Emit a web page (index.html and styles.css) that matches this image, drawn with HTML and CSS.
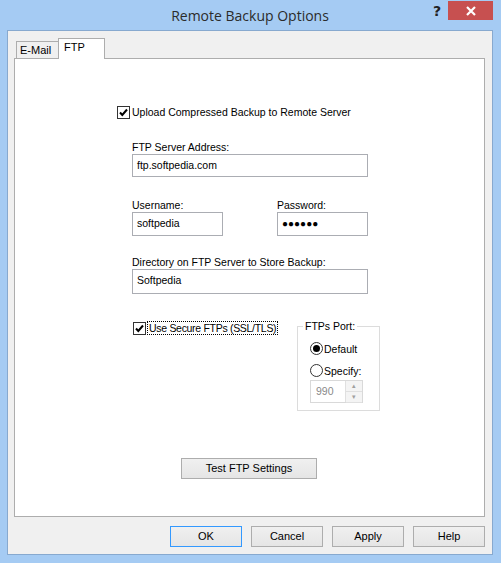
FILE: index.html
```html
<!DOCTYPE html>
<html lang="en">

<head>
    <meta charset="UTF-8">
    <title>Remote Backup Options</title>
    <link rel="stylesheet" href="styles.css">
</head>

<body>
    <div class="window">
        <div class="titlebar">
            <span class="title">Remote Backup Options</span>
            <span class="help-btn">?</span>
            <span class="close-btn">
                <svg width="10" height="10" viewBox="0 0 10 10">
                    <path d="M1 1 L9 9 M9 1 L1 9" stroke="#fff" stroke-width="2.2" />
                </svg>
            </span>
        </div>
        <div class="client">
            <div class="tabs">
                <span class="tab">E-Mail</span>
                <span class="tab active">FTP</span>
            </div>
            <div class="panel">
                <div class="content">
                    <label class="check-row upload">
                        <span class="checkbox">
                            <svg width="13" height="13" viewBox="0 0 13 13">
                                <rect x="0.5" y="0.5" width="12" height="12" fill="#fff" stroke="#333" />
                                <path d="M3 6.5 L5.3 9 L10 3.5" fill="none" stroke="#000" stroke-width="2" />
                            </svg>
                        </span>
                        <span>Upload Compressed Backup to Remote Server</span>
                    </label>

                    <div class="field server">
                        <span class="label">FTP Server Address:</span>
                        <span class="input wide">ftp.softpedia.com</span>
                    </div>

                    <div class="cred-row">
                        <div class="field">
                            <span class="label">Username:</span>
                            <span class="input short">softpedia</span>
                        </div>
                        <div class="field">
                            <span class="label">Password:</span>
                            <span class="input short pass">&#9679;&#9679;&#9679;&#9679;&#9679;&#9679;</span>
                        </div>
                    </div>

                    <div class="field directory">
                        <span class="label">Directory on FTP Server to Store Backup:</span>
                        <span class="input wide dir">Softpedia</span>
                    </div>

                    <div class="secure-row">
                        <label class="check-row secure">
                            <span class="checkbox">
                                <svg width="13" height="13" viewBox="0 0 13 13">
                                    <rect x="0.5" y="0.5" width="12" height="12" fill="#fff" stroke="#333" />
                                    <path d="M3 6.5 L5.3 9 L10 3.5" fill="none" stroke="#000" stroke-width="2" />
                                </svg>
                            </span>
                            <span class="focus">Use Secure FTPs (SSL/TLS)</span>
                        </label>

                        <fieldset class="port-box">
                            <legend>FTPs Port:</legend>
                            <div class="radio-row">
                                <svg width="13" height="13" viewBox="0 0 13 13">
                                    <circle cx="6.5" cy="6.5" r="6" fill="#fff" stroke="#333" />
                                    <circle cx="6.5" cy="6.5" r="3.5" fill="#000" />
                                </svg>
                                <span>Default</span>
                            </div>
                            <div class="radio-row">
                                <svg width="13" height="13" viewBox="0 0 13 13">
                                    <circle cx="6.5" cy="6.5" r="6" fill="#fff" stroke="#333" />
                                </svg>
                                <span>Specify:</span>
                            </div>
                            <div class="spin">
                                <span class="spin-value">990</span>
                                <span class="spin-btns">
                                    <span class="spin-btn">&#9652;</span>
                                    <span class="spin-btn">&#9662;</span>
                                </span>
                            </div>
                        </fieldset>
                    </div>

                    <div class="test-row">
                        <span class="button test">Test FTP Settings</span>
                    </div>
                </div>
            </div>
            <div class="buttons">
                <span class="button default">OK</span>
                <span class="button">Cancel</span>
                <span class="button">Apply</span>
                <span class="button">Help</span>
            </div>
        </div>
    </div>
</body>

</html>
```

FILE: styles.css
```css
body {
    margin: 0;
    font-family: "Liberation Sans", Arial, sans-serif;
    font-size: 10.5px;
    color: #000;
}

.window {
    width: 501px;
    height: 563px;
    background: #a5cbf3;
    box-sizing: border-box;
    padding: 0 8px 8px 7px;
    display: flex;
    flex-direction: column;
}

.titlebar {
    height: 30px;
    display: flex;
    align-items: center;
    position: relative;
}

.title {
    flex: 1;
    text-align: center;
    font-family: "Open Sans", sans-serif;
    font-size: 14px;
    color: #2b2b2b;
}

.help-btn {
    position: absolute;
    right: 52px;
    top: 3px;
    font-family: "DejaVu Sans", sans-serif;
    font-weight: bold;
    font-size: 14px;
    color: #222;
}

.close-btn {
    position: absolute;
    right: 0;
    top: 1px;
    width: 45px;
    height: 19px;
    background: #c75050;
    display: flex;
    align-items: center;
    justify-content: center;
}

.client {
    flex: 1;
    background: #f0f0f0;
    border: 1px solid #87a9cf;
    padding: 7px 7px 0 6px;
    display: flex;
    flex-direction: column;
}

.tabs {
    display: flex;
    align-items: flex-end;
    height: 20px;
    padding-left: 2px;
    font-size: 11px;
}

.tab {
    border: 1px solid #adadad;
    border-bottom: none;
    background: #f0f0f0;
    height: 16px;
    line-height: 16px;
    width: 38px;
    padding-left: 3px;
}

.tab.active {
    background: #fff;
    height: 20px;
    line-height: 16px;
    width: 40px;
    padding-left: 5px;
    margin-left: -1px;
    margin-bottom: -1px;
    position: relative;
}

.panel {
    height: 459px;
    box-sizing: border-box;
    background: #fff;
    border: 1px solid #adadad;
}

.content {
    padding: 45px 0 0 117px;
}

.check-row {
    display: flex;
    align-items: center;
    height: 16px;
}

.checkbox {
    width: 13px;
    height: 13px;
    margin-right: 2px;
    display: flex;
}

.upload {
    margin-left: -15px;
}

.field {
    display: flex;
    flex-direction: column;
}

.label {
    height: 14px;
    line-height: 14px;
}

.input {
    box-sizing: border-box;
    border: 1px solid #abadb3;
    height: 23px;
    line-height: 21px;
    padding-left: 4px;
    background: #fff;
}

.wide {
    width: 236px;
}

.short {
    width: 91px;
}

.pass {
    font-size: 10px;
}

.server {
    margin-top: 20px;
}

.cred-row {
    display: flex;
    gap: 54px;
    margin-top: 21px;
}

.cred-row .input {
    height: 24px;
}

.directory {
    margin-top: 19px;
}

.dir {
    height: 25px;
}

.secure-row {
    display: grid;
    grid-template-columns: 165px 83px;
    align-items: start;
    margin-top: 26px;
}

.secure {
    margin-left: 1px;
}

.focus {
    outline: 1px dotted #000;
    outline-offset: 0;
    padding: 0 1px;
    letter-spacing: -0.3px;
}

.port-box {
    margin: 0;
    padding: 9px 0 0 0;
    width: 83px;
    height: 91px;
    box-sizing: border-box;
    border: 1px solid #dcdcdc;
    min-width: 0;
}

.port-box legend {
    padding: 0 2px;
    margin-left: 5px;
    line-height: 13px;
}

.radio-row {
    display: flex;
    align-items: center;
    height: 13px;
    gap: 1px;
    margin: 0 0 9px 12px;
}

.radio-row svg {
    flex: none;
}

.spin {
    display: flex;
    width: 53px;
    height: 23px;
    box-sizing: border-box;
    border: 1px solid #d9d9d9;
    margin: -6px 0 0 12px;
    color: #8a8a8a;
    background: #fff;
}

.spin-value {
    flex: 1;
    line-height: 21px;
    padding-left: 5px;
}

.spin-btns {
    display: flex;
    flex-direction: column;
    width: 16px;
    border-left: 1px solid #e0e0e0;
}

.spin-btn {
    flex: 1;
    font-size: 7px;
    line-height: 10px;
    text-align: center;
    color: #a0a0a0;
    background: #f4f4f4;
    border-bottom: 1px solid #e0e0e0;
}

.test-row {
    margin-top: 47px;
    padding-left: 49px;
}

.button {
    display: inline-block;
    box-sizing: border-box;
    border: 1px solid #adadad;
    background: linear-gradient(#f0f0f0, #e5e5e5);
    text-align: center;
    font-size: 11px;
}

.test {
    width: 136px;
    height: 21px;
    line-height: 19px;
}

.buttons {
    display: flex;
    justify-content: flex-end;
    gap: 9px;
    margin-top: 9px;
}

.buttons .button {
    width: 72px;
    height: 21px;
    line-height: 19px;
}

.button.default {
    border-color: #3399ff;
}
```
